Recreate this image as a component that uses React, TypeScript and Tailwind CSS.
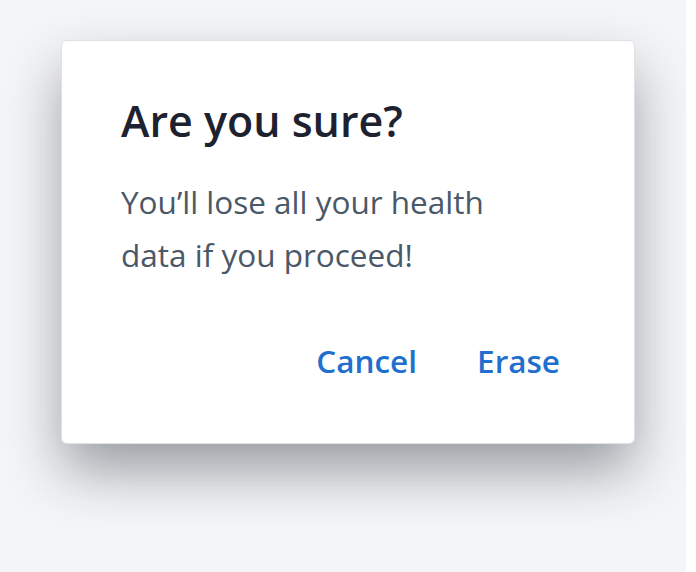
import React from 'react'

// Confirmation dialog: erase health data
export default function App() {
  return (
    <div className="flex h-[572px] w-[696px] bg-white" style={{ fontFamily: '"Open Sans", "Noto Sans", sans-serif' }}>
      <div className="h-full w-[686px] bg-[#f4f5f7] pl-[61px] pt-[40px]">
        <div className="h-[404px] w-[574px] rounded-md border border-[#dfe1e5] bg-white px-[59px] pt-[51px] shadow-[0_28px_56px_-2px_rgba(25,30,40,0.42)]">
          <h1 className="text-[43px] font-semibold leading-[58px] text-[#1e2230]">Are you sure?</h1>
          <p className="mt-[25px] w-[400px] text-[31.5px] leading-[53px] text-[#4a5868]">
            You’ll lose all your health data if you proceed!
          </p>
          <div className="mt-[60px] flex justify-end gap-[30px]">
            <button className="px-[15px] text-[31.5px] font-semibold leading-[40px] text-[#1f6fcf]">Cancel</button>
            <button className="px-[15px] text-[31.5px] font-semibold leading-[40px] text-[#1f6fcf]">Erase</button>
          </div>
        </div>
      </div>
    </div>
  )
}
